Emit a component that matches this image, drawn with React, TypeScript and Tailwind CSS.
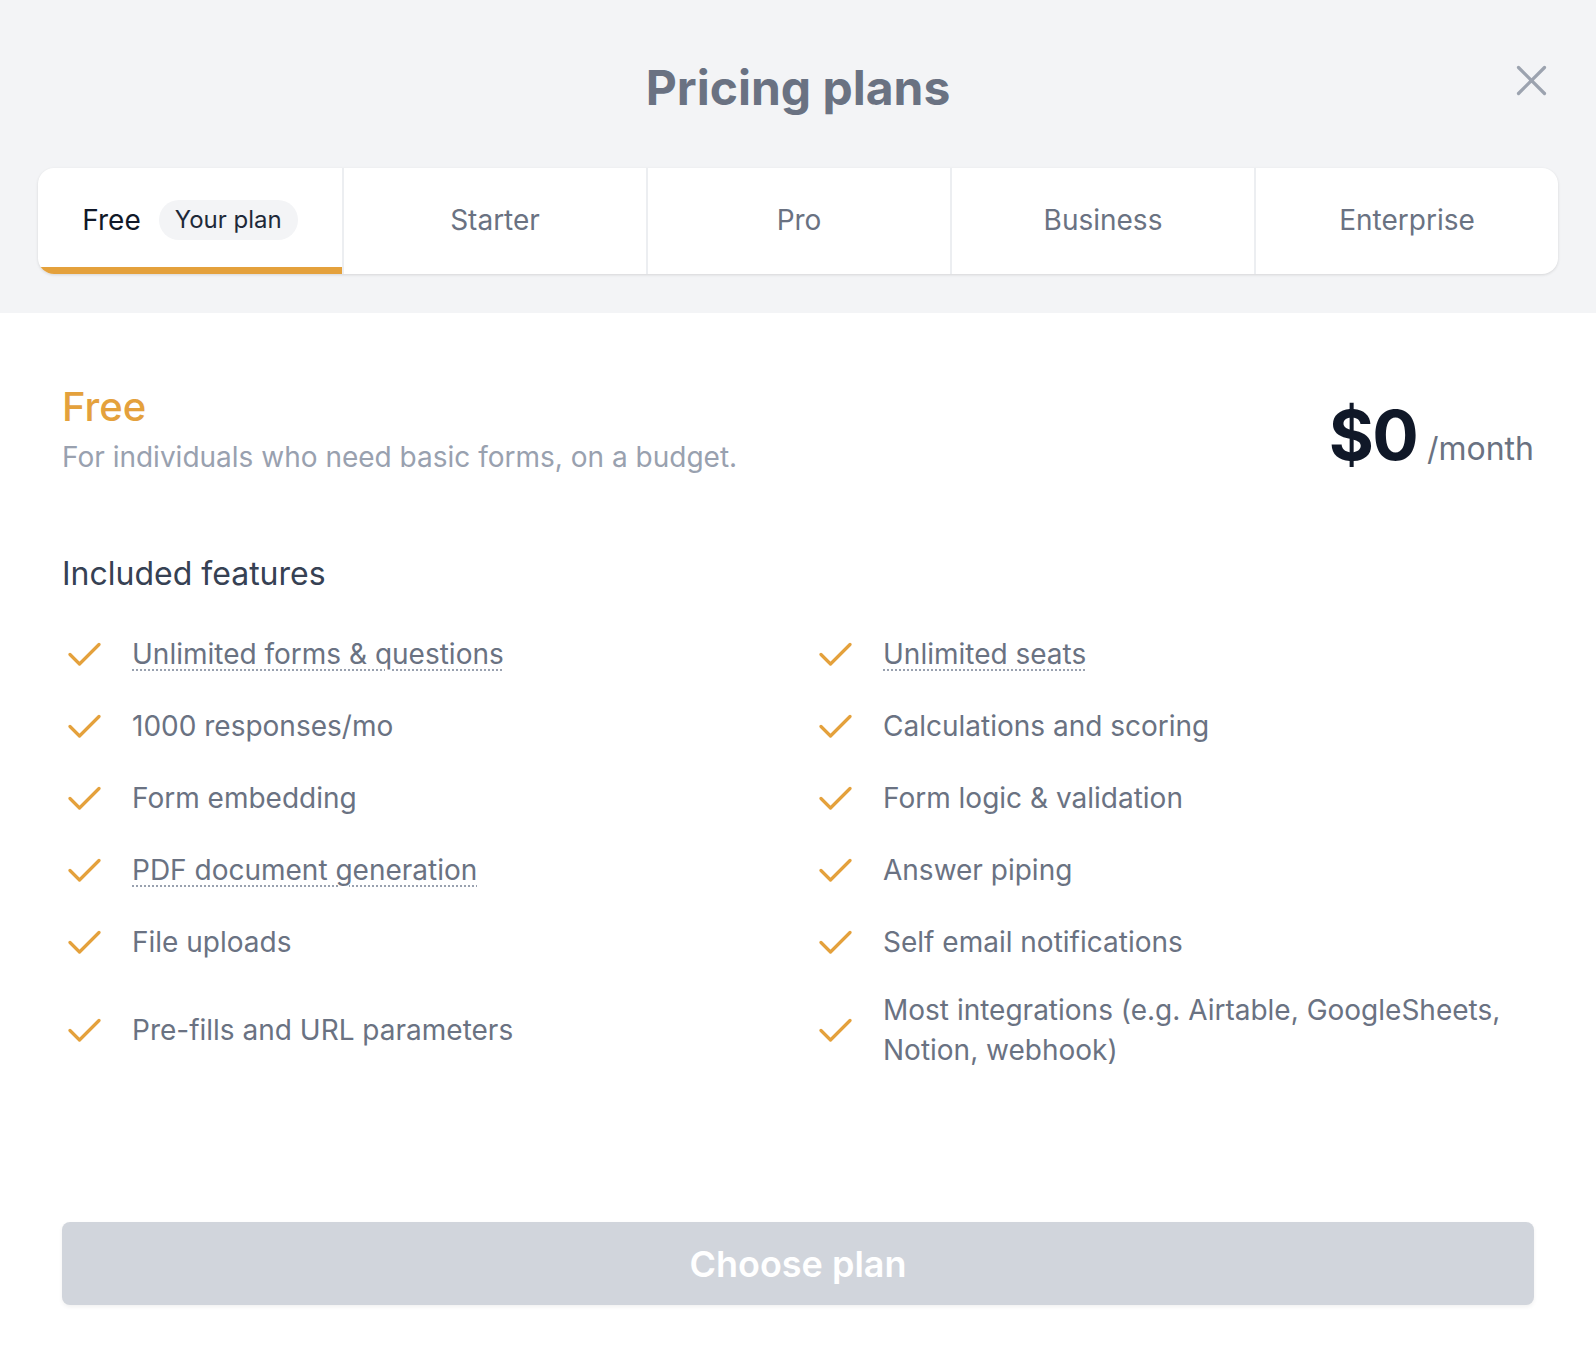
import React from "react";

const ORANGE = "#e4a13c";

function Check() {
  return (
    <svg width="33" height="25" viewBox="0 0 33 25" fill="none" className="ml-[6px] shrink-0">
      <path d="M2 12.5 L11.5 22 L31 2.5" stroke={ORANGE} strokeWidth="3.2" strokeLinecap="round" strokeLinejoin="round" />
    </svg>
  );
}

type Feature = { text: string; dotted?: boolean };

const features: Feature[] = [
  { text: "Unlimited forms & questions", dotted: true },
  { text: "Unlimited seats", dotted: true },
  { text: "1000 responses/mo" },
  { text: "Calculations and scoring" },
  { text: "Form embedding" },
  { text: "Form logic & validation" },
  { text: "PDF document generation", dotted: true },
  { text: "Answer piping" },
  { text: "File uploads" },
  { text: "Self email notifications" },
  { text: "Pre-fills and URL parameters" },
  { text: "Most integrations (e.g. Airtable, GoogleSheets, Notion, webhook)" },
];

const tabs = ["Free", "Starter", "Pro", "Business", "Enterprise"];

export default function App() {
  return (
    <div className="min-h-[1364px] bg-white font-['Inter','Noto_Sans',sans-serif]">
      <header className="relative bg-gray-100 px-[38px] pt-[64px] pb-[39px]">
        <h1 className="text-center text-[48px] leading-[48px] font-bold text-gray-500">Pricing plans</h1>
        <button className="absolute right-[49px] top-[65px]" aria-label="Close">
          <svg width="31" height="31" viewBox="0 0 31 31" fill="none">
            <path d="M2.5 2.5 L28.5 28.5 M28.5 2.5 L2.5 28.5" stroke="#9ca3af" strokeWidth="3.2" strokeLinecap="round" />
          </svg>
        </button>
        <div className="mt-[56px] grid h-[106px] grid-cols-5 overflow-hidden rounded-2xl bg-white shadow-[0_1px_3px_rgba(0,0,0,0.12)]">
          {tabs.map((t, i) => (
            <div key={t} className={`flex flex-col ${i > 0 ? "border-l-2 border-[#eceef1]" : ""}`}>
              <div className="flex flex-1 items-center justify-center pt-[5px]">
                {i === 0 ? (
                  <div className="flex items-center gap-[18px]">
                    <span className="text-[28px] leading-[40px] text-gray-900">Free</span>
                    <span className="rounded-full bg-gray-100 px-[16px] text-[24px] leading-[40px] text-gray-800">Your plan</span>
                  </div>
                ) : (
                  <span className="text-[28px] leading-[40px] text-gray-500">{t}</span>
                )}
              </div>
              <div className={`h-[7px] ${i === 0 ? "bg-[#e4a13c]" : ""}`} />
            </div>
          ))}
        </div>
      </header>

      <main className="px-[62px] pt-[70px] pb-[59px]">
        <div className="flex items-start justify-between">
          <div>
            <h2 className="text-[40px] leading-[48px] font-medium text-[#e4a13c]">Free</h2>
            <p className="mt-[6px] text-[28px] leading-[40px] text-gray-400">For individuals who need basic forms, on a budget.</p>
          </div>
          <div className="mt-[17px] flex items-baseline">
            <span className="text-[69px] leading-[70px] font-bold tracking-tight text-gray-900">$0</span>
            <span className="ml-[10px] text-[32px] leading-[40px] text-gray-500">/month</span>
          </div>
        </div>

        <h3 className="mt-[77px] text-[32px] leading-[40px] text-gray-700">Included features</h3>

        <div className="mt-[40px] grid grid-cols-2 gap-x-[30px] gap-y-8">
          {features.map((f, idx) => (
            <div key={f.text} className={`flex items-center ${idx >= 10 ? "-mt-[4px]" : ""}`}>
              <Check />
              <span
                className={`ml-[31px] text-[28px] leading-[40px] text-gray-500 ${
                  f.dotted ? "underline decoration-dotted decoration-gray-400 decoration-2 underline-offset-[5px]" : ""
                }`}
              >
                {f.text}
              </span>
            </div>
          ))}
        </div>

        <button className="mt-[152px] flex h-[83px] w-full items-center justify-center rounded-lg bg-gray-300 text-[36px] font-semibold text-white shadow-[0_2px_4px_rgba(0,0,0,0.06)]">
          Choose plan
        </button>
      </main>
    </div>
  );
}
